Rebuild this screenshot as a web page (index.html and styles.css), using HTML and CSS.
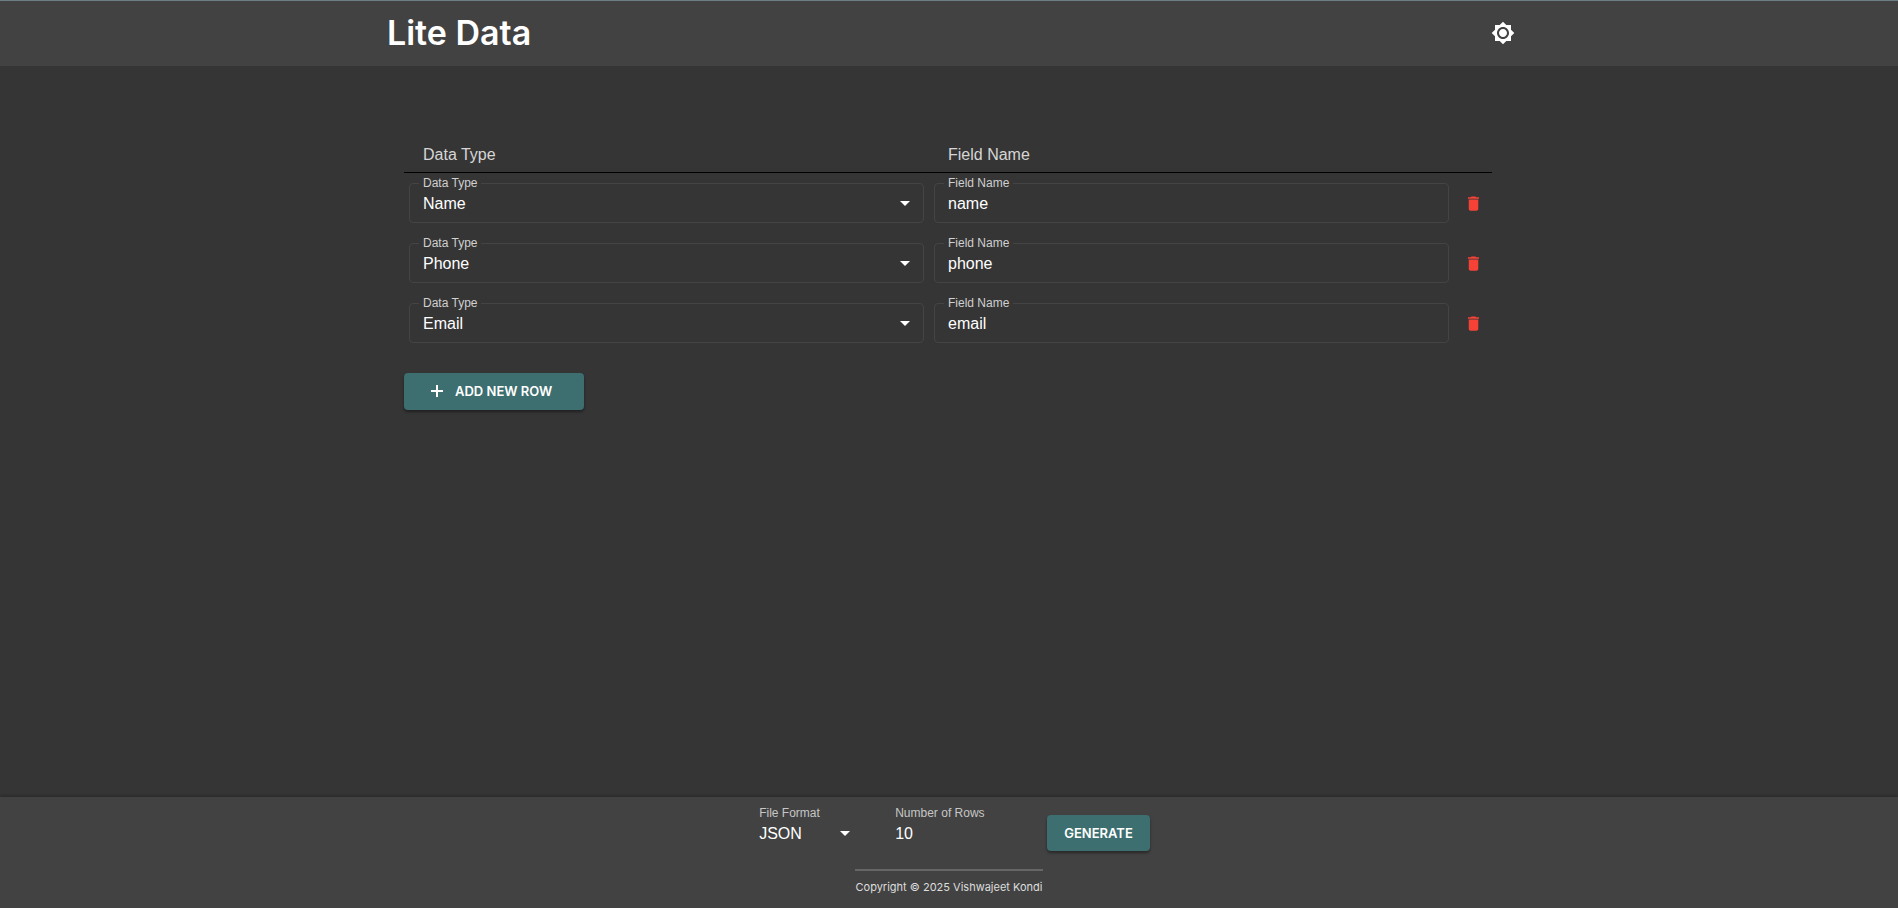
FILE: index.html
```html
<!DOCTYPE html>
<html lang="en">
<head>
<meta charset="utf-8">
<meta name="viewport" content="width=device-width, initial-scale=1">
<title>Lite Data</title>
<link rel="stylesheet" href="styles.css">
</head>
<body>
<svg class="sprite" aria-hidden="true">
  <symbol id="caret" viewBox="0 0 24 24"><path d="M7 10l5 5 5-5z"/></symbol>
  <symbol id="trash" viewBox="0 0 24 24"><path d="M6 19c0 1.1.9 2 2 2h8c1.1 0 2-.9 2-2V7H6v12zM19 4h-3.5l-1-1h-5l-1 1H5v2h14V4z"/></symbol>
</svg>
<header class="header">
  <div class="header-inner">
    <h1 class="brand">Lite Data</h1>
    <button class="icon-button" type="button" aria-label="Toggle theme">
      <svg class="icon" viewBox="0 0 24 24"><path d="M20 8.69V4h-4.69L12 .69 8.69 4H4v4.69L.69 12 4 15.31V20h4.69L12 23.31 15.31 20H20v-4.69L23.31 12 20 8.69zM12 18c-3.31 0-6-2.69-6-6s2.69-6 6-6 6 2.69 6 6-2.69 6-6 6zm0-10c-2.21 0-4 1.79-4 4s1.79 4 4 4 4-1.79 4-4-1.79-4-4-4z"/></svg>
    </button>
  </div>
</header>
<main class="main">
  <table class="fields">
    <colgroup><col><col><col class="col-action"></colgroup>
    <thead>
      <tr><th scope="col">Data Type</th><th scope="col">Field Name</th><td></td></tr>
    </thead>
    <tbody>
      <tr>
        <td><div class="field"><label for="type1">Data Type</label><select id="type1"><option>Name</option><option>Phone</option><option>Email</option></select><svg class="icon caret"><use href="#caret"/></svg></div></td>
        <td><div class="field"><label for="name1">Field Name</label><input id="name1" type="text" value="name"></div></td>
        <td><button class="delete" type="button" aria-label="Delete row"><svg class="trash"><use href="#trash"/></svg></button></td>
      </tr>
      <tr>
        <td><div class="field"><label for="type2">Data Type</label><select id="type2"><option>Name</option><option selected>Phone</option><option>Email</option></select><svg class="icon caret"><use href="#caret"/></svg></div></td>
        <td><div class="field"><label for="name2">Field Name</label><input id="name2" type="text" value="phone"></div></td>
        <td><button class="delete" type="button" aria-label="Delete row"><svg class="trash"><use href="#trash"/></svg></button></td>
      </tr>
      <tr>
        <td><div class="field"><label for="type3">Data Type</label><select id="type3"><option>Name</option><option>Phone</option><option selected>Email</option></select><svg class="icon caret"><use href="#caret"/></svg></div></td>
        <td><div class="field"><label for="name3">Field Name</label><input id="name3" type="text" value="email"></div></td>
        <td><button class="delete" type="button" aria-label="Delete row"><svg class="trash"><use href="#trash"/></svg></button></td>
      </tr>
    </tbody>
  </table>
  <button class="button button-add" type="button">
    <svg class="plus" viewBox="0 0 20 20"><path d="M10 4v12M4 10h12"/></svg>
    Add new row
  </button>
</main>
<footer class="footer">
  <form class="controls">
    <div class="control control-format"><label for="format">File Format</label><select id="format"><option>JSON</option><option>CSV</option></select><svg class="icon caret"><use href="#caret"/></svg></div>
    <div class="control control-rows"><label for="rows">Number of Rows</label><input id="rows" type="text" inputmode="numeric" value="10"></div>
    <button class="button button-generate" type="button">Generate</button>
  </form>
  <p class="copyright">Copyright © 2025 Vishwajeet Kondi</p>
</footer>
</body>
</html>
```
FILE: styles.css
```css
* { box-sizing: border-box; }

body {
  margin: 0;
  min-height: 100vh;
  display: flex;
  flex-direction: column;
  background: #353535;
  color: #fff;
  font-family: "Liberation Sans", Arial, sans-serif;
  font-size: 16px;
}

button, input, select { font: inherit; color: inherit; }
button { cursor: pointer; border: 0; }

.sprite { position: absolute; width: 0; height: 0; }
.icon { width: 24px; height: 24px; fill: currentColor; display: block; }

.header {
  background: #424242;
  border-top: 1px solid #6c7d86;
}
.header-inner {
  max-width: 1132px;
  height: 65px;
  margin: 0 auto;
  padding: 0 0 2px 4px;
  display: flex;
  align-items: center;
  justify-content: space-between;
}
.brand {
  margin: 0;
  font-family: Inter, "Liberation Sans", sans-serif;
  font-size: 34px;
  line-height: 40px;
  font-weight: 600;
}
.icon-button { padding: 0; background: none; }

.main {
  flex: 1;
  width: 100%;
  max-width: 1090px;
  margin: 0 auto;
  padding: 70px 2px 0 0;
}
.fields {
  width: 100%;
  table-layout: fixed;
  border-collapse: collapse;
}
.col-action { width: 38px; }
.fields th {
  height: 36px;
  padding: 2px 19px 0;
  text-align: left;
  font-weight: 400;
  color: #d6d6d6;
}
.fields thead { border-bottom: 1px solid #000; }
.fields tbody td { height: 60px; padding: 2px 5px 0; }

.field { position: relative; }
.field label {
  position: absolute;
  top: -7px;
  left: 10px;
  padding: 0 4px;
  font-size: 12px;
  line-height: 14px;
  background: #353535;
  color: #d0d0d0;
}
.field input, .field select {
  display: block;
  width: 100%;
  height: 40px;
  padding: 0 13px;
  border: 1px solid #444;
  border-radius: 4px;
  background: transparent;
  outline: 0;
}
.field input { padding-top: 2px; }
select { appearance: none; }
.caret {
  position: absolute;
  right: 7px;
  bottom: 8px;
  pointer-events: none;
}
.delete {
  display: flex;
  width: 100%;
  padding: 0;
  justify-content: center;
  background: none;
  color: #f44336;
}
.trash { width: 19px; height: 19px; flex: none; fill: currentColor; }

.button {
  display: flex;
  align-items: center;
  justify-content: center;
  height: 36px;
  padding: 0 17px;
  border-radius: 4px;
  background: #3d6e70;
  box-shadow: 0 2px 3px rgba(0, 0, 0, .4);
  font-family: Inter, "Liberation Sans", sans-serif;
  font-size: 13px;
  font-weight: 600;
  text-transform: uppercase;
}
.button-add {
  height: 37px;
  margin-top: 21px;
  padding: 0 32px 1px 23px;
  gap: 8px;
}
.plus { width: 20px; height: 20px; fill: none; stroke: currentColor; stroke-width: 2; }

.footer {
  display: flex;
  flex-direction: column;
  align-items: center;
  gap: 18px;
  padding: 8px 16px 14px;
  background: #424242;
  box-shadow: 0 -1px 3px rgba(0, 0, 0, .25);
}
.controls { display: flex; align-items: flex-end; padding-left: 11px; }
.control { position: relative; }
.control label {
  display: block;
  font-size: 12px;
  line-height: 16px;
  color: #c6c6c6;
}
.control input, .control select {
  display: block;
  width: 100%;
  height: 24px;
  padding: 0;
  border: 0;
  background: transparent;
  outline: 0;
}
.control input { padding-top: 2px; }
.control-format { width: 100px; margin: 0 36px 6px 0; }
.control-format .caret { right: 2px; bottom: 0; }
.control-rows { width: 120px; margin: 0 32px 6px 0; }
.copyright {
  margin: 0;
  padding: 9px 1px 0;
  border-top: 2px solid #666;
  font-family: Inter, "Liberation Sans", sans-serif;
  font-size: 11px;
  line-height: 14px;
  color: #ddd;
}
```
